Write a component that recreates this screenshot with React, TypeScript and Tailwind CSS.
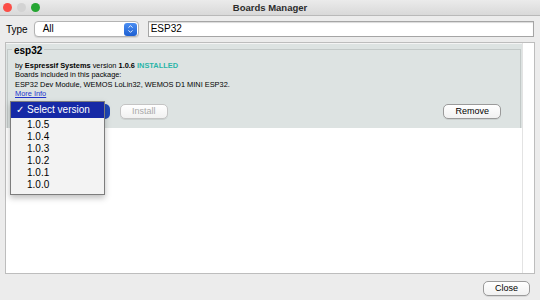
import { ChevronDown, ChevronUp } from 'lucide-react';

const VERSIONS = ['1.0.5', '1.0.4', '1.0.3', '1.0.2', '1.0.1', '1.0.0'];

const Light = ({ color }: { color: string }) => (
  <span className={`block h-[9px] w-[9px] rounded-full ${color}`}></span>
);

const MacButton = ({ label, disabled }: { label: string; disabled?: boolean }) => (
  <button
    className={
      'flex h-[15px] items-center justify-center rounded-[5px] border border-[#9a9a9a] bg-gradient-to-b from-white to-[#f1f1f1] px-[11px] text-[9px] leading-none shadow-[0_1px_0_rgba(0,0,0,0.08)] ' +
      (disabled ? 'border-[#c4c4c4] text-[#a9a9a9]' : 'text-black')
    }
  >
    {label}
  </button>
);

const App = () => {
  return (
    <div className="flex h-[300px] w-[540px] flex-col overflow-hidden bg-[#ececec] font-['Liberation_Sans',sans-serif] text-black">
      {/* title bar */}
      <div className="grid h-[16px] grid-cols-[1fr_auto_1fr] items-center border-b border-[#b9b9b9] bg-gradient-to-b from-[#ebebeb] to-[#d9d9d9]">
        <div className="flex items-center gap-[5px] pl-[3px]">
          <Light color="bg-[#fb4e47]" />
          <Light color="bg-[#d3d3d3]" />
          <Light color="bg-[#25a532]" />
        </div>
        <p className="text-[9.5px] font-bold leading-none text-[#2c2c2c]">Boards Manager</p>
        <div></div>
      </div>

      {/* toolbar */}
      <div className="flex items-center gap-[6px] px-[6px] pb-[5px] pt-[5px]">
        <span className="text-[10px]">Type</span>
        <div className="flex h-[16px] w-[105px] items-center justify-between rounded-[4px] border border-[#b3b3b3] bg-white pl-[8px] pr-[1px] shadow-[0_1px_1px_rgba(0,0,0,0.1)]">
          <span className="text-[10px] leading-none">All</span>
          <span className="flex h-[13px] w-[13px] flex-col items-center justify-center rounded-[3px] bg-gradient-to-b from-[#4b8ef2] to-[#1d5fd1] text-white">
            <ChevronUp size={7} strokeWidth={3} className="-mb-[1px]" />
            <ChevronDown size={7} strokeWidth={3} className="-mt-[1px]" />
          </span>
        </div>
        <div className="ml-[3px] flex h-[16px] flex-1 items-center border border-[#a5a5a5] bg-white pl-[2px] shadow-[inset_0_1px_1px_rgba(0,0,0,0.15)]">
          <span className="text-[10px] leading-none">ESP32</span>
        </div>
      </div>

      {/* list */}
      <div className="relative mx-[5px] flex flex-1 border border-[#bdbdbd] bg-white">
        <div className="flex-1">
          <div className="h-[85px] border-t border-[#f4f4f4] bg-[#dde3e2] px-[1px] pt-[5px]">
            <div className="h-full border border-b-0 border-[#c3c9c8] pl-[7px] pr-[19px]">
              <div className="-ml-[3px] -mt-[5px] flex">
                <span className="bg-[#dde3e2] px-[2px] text-[10px] font-bold leading-[12px]">esp32</span>
              </div>
              <div className="pt-[4px] text-[7.4px] leading-[9.4px]">
                <p>
                  by <b>Espressif Systems</b> version <b>1.0.6</b>{' '}
                  <b className="text-[#2ab5a8]">INSTALLED</b>
                </p>
                <p>Boards included in this package:</p>
                <p>ESP32 Dev Module, WEMOS LoLin32, WEMOS D1 MINI ESP32.</p>
                <p className="text-[#2233cc] underline">More Info</p>
              </div>
              <div className="mt-[5px] flex items-center">
                <div className="-ml-[5px] h-[15px] w-[100px] rounded-[5px] bg-[#1f47b8]"></div>
                <div className="ml-[10px]">
                  <MacButton label="Install" disabled />
                </div>
                <div className="ml-auto">
                  <MacButton label="Remove" />
                </div>
              </div>
            </div>
          </div>
        </div>
        <div className="w-[12px] border-l border-[#e3e3e3] bg-white"></div>

        {/* version popup */}
        <div className="absolute left-[4px] top-[58px] w-[95px] border border-[#7d7d7d] bg-[#f3f3f3] pb-[3px] shadow-[0_3px_6px_rgba(0,0,0,0.25)]">
          <div className="flex h-[16px] items-center bg-[#1629a6] pl-[5px] text-[10px] leading-none text-white">
            <span className="w-[11px]">✓</span>
            <span>Select version</span>
          </div>
          <ul className="list-none pl-[16px] pt-[1px] text-[10px] leading-[12px]">
            {VERSIONS.map((v) => (
              <li key={v}>{v}</li>
            ))}
          </ul>
        </div>
      </div>

      {/* footer */}
      <div className="flex h-[26px] items-start justify-end pr-[10px] pt-[7px]">
        <MacButton label="Close" />
      </div>
    </div>
  );
};

export default App;
